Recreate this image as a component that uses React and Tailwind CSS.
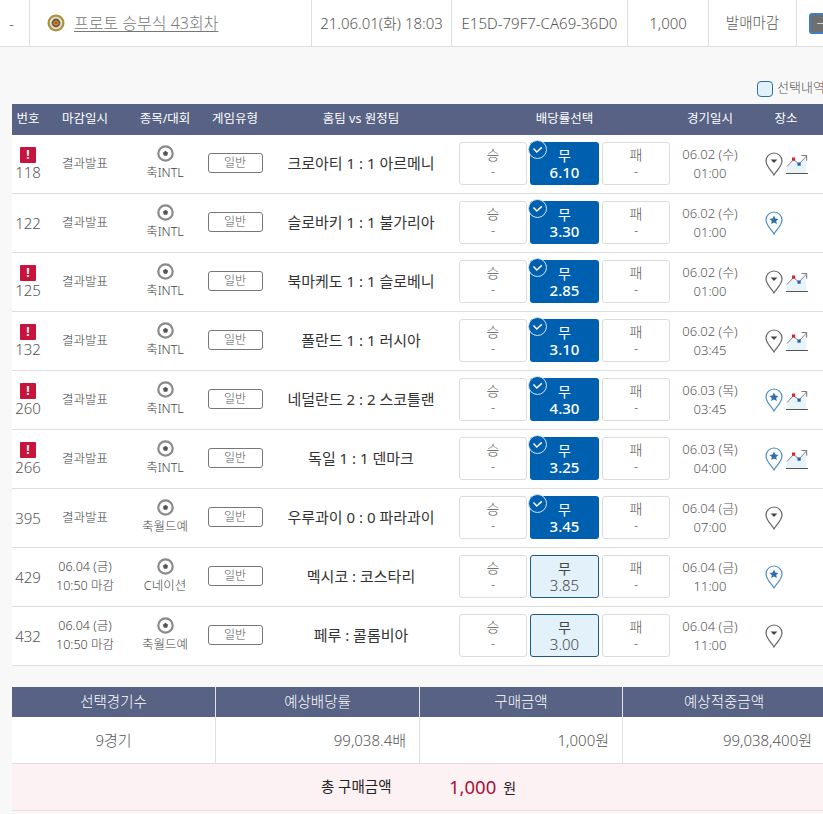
const FONT = "font-['Noto_Sans','Noto_Sans_CJK_KR',sans-serif]";

const games = [
  { no: "118", alert: true, league: "축INTL", match: "크로아티 1 : 1 아르메니", odds: "6.10", date: "06.02 (수)", time: "01:00", pin: "gray", chart: true, done: true },
  { no: "122", league: "축INTL", match: "슬로바키 1 : 1 불가리아", odds: "3.30", date: "06.02 (수)", time: "01:00", pin: "blue", done: true },
  { no: "125", alert: true, league: "축INTL", match: "북마케도 1 : 1 슬로베니", odds: "2.85", date: "06.02 (수)", time: "01:00", pin: "gray", chart: true, done: true },
  { no: "132", alert: true, league: "축INTL", match: "폴란드 1 : 1 러시아", odds: "3.10", date: "06.02 (수)", time: "03:45", pin: "gray", chart: true, done: true },
  { no: "260", alert: true, league: "축INTL", match: "네덜란드 2 : 2 스코틀랜", odds: "4.30", date: "06.03 (목)", time: "03:45", pin: "blue", chart: true, done: true },
  { no: "266", alert: true, league: "축INTL", match: "독일 1 : 1 덴마크", odds: "3.25", date: "06.03 (목)", time: "04:00", pin: "blue", chart: true, done: true },
  { no: "395", league: "축월드예", match: "우루과이 0 : 0 파라과이", odds: "3.45", date: "06.04 (금)", time: "07:00", pin: "gray", done: true },
  { no: "429", league: "C네이션", match: "멕시코 : 코스타리", odds: "3.85", date: "06.04 (금)", time: "11:00", pin: "blue", close: "10:50 마감" },
  { no: "432", league: "축월드예", match: "페루 : 콜롬비아", odds: "3.00", date: "06.04 (금)", time: "11:00", pin: "gray", close: "10:50 마감" },
];

const COLS = "grid grid-cols-[32px_82px_78px_62px_190px_217px_74px_78px]";
const SUMMARY_COLS = "grid grid-cols-[204px_204px_203px_202px]";

function TargetIcon() {
  return (
    <svg width="18" height="18" viewBox="0 0 18 18" className="shrink-0">
      <circle cx="9" cy="9" r="8.5" fill="#a8923f" />
      <circle cx="9" cy="9" r="6.2" fill="#e9e4cf" />
      <circle cx="9" cy="9" r="4.4" fill="#5d5a52" />
      <circle cx="9" cy="9" r="2.6" fill="#d98a1f" />
      <circle cx="9" cy="9" r="1.2" fill="#c9401c" />
    </svg>
  );
}

function BallIcon() {
  return (
    <svg width="17" height="17" viewBox="0 0 17 17">
      <circle cx="8.5" cy="8.5" r="7.2" fill="#fff" stroke="#8a8a8a" strokeWidth="2.2" />
      <path d="M8.5 5.8l2.6 1.9-1 3h-3.2l-1-3z" fill="#555" />
    </svg>
  );
}

function PinIcon({ color }) {
  const blue = color === "blue";
  const stroke = blue ? "#4c8fc4" : "#666";
  return (
    <svg width="18" height="24" viewBox="0 0 18 24">
      <path d="M9 23 C7 19 1 14.5 1 9 A8 8 0 0 1 17 9 C17 14.5 11 19 9 23Z" fill="#fff" stroke={stroke} strokeWidth="1.2" />
      {blue ? (
        <path d="M9 4.6l1.4 2.9 3.1.4-2.3 2.1.6 3.1L9 11.6l-2.8 1.5.6-3.1-2.3-2.1 3.1-.4z" fill="#2d6fab" />
      ) : (
        <path d="M5.6 7.6h6.8L9 11z" fill="#444" />
      )}
    </svg>
  );
}

function ChartIcon() {
  return (
    <svg width="22" height="22" viewBox="0 0 22 22">
      <path d="M1 14 L7.5 6.5 L13 11 L20 4 V20 H1Z" fill="#e9f3fa" />
      <path d="M1 13.5 L7.5 6.5 L13 11 L20.5 3" fill="none" stroke="#777" strokeWidth="0.9" />
      <path d="M15.5 2.5h5.2v5.2" fill="none" stroke="#666" strokeWidth="0.9" />
      <rect x="6" y="4.5" width="3.2" height="3.2" fill="#d3263a" />
      <rect x="11.5" y="9.5" width="3.2" height="3.2" fill="#1f5fb5" />
      <path d="M0 20.5h22" stroke="#555" strokeWidth="1" />
    </svg>
  );
}

function OddButton({ label, value, state }) {
  if (state === "done") {
    return (
      <div className="relative flex h-[43px] w-[69px] flex-col items-center justify-center rounded-[3px] bg-[#0060b0] leading-[17px] text-white">
        <span className="absolute -left-[2px] -top-[2px] flex size-[19px] items-center justify-center rounded-full border border-[#cfe3f3] bg-[#0060b0]">
          <svg width="11" height="8" viewBox="0 0 11 8">
            <path d="M1.5 2.6 L4.8 6 L9.8 1.4" fill="none" stroke="#fff" strokeWidth="1.5" />
          </svg>
        </span>
        <span className="text-[14px]">{label}</span>
        <span className="text-[15px] font-medium">{value}</span>
      </div>
    );
  }
  if (state === "picked") {
    return (
      <div className="flex h-[43px] w-[69px] flex-col items-center justify-center rounded-[3px] border border-[#1d5a85] bg-[#e3f1fb] leading-[17px] text-[#444]">
        <span className="text-[14px]">{label}</span>
        <span className="text-[15px] font-light">{value}</span>
      </div>
    );
  }
  return (
    <div className="flex h-[43px] w-[68px] flex-col items-center justify-center rounded-[3px] border border-[#dcdcdc] bg-white pb-[2px] leading-[16px] text-[#555]">
      <span className="text-[14px] font-light">{label}</span>
      <span className="text-[13px] font-light">-</span>
    </div>
  );
}

function GameRow({ game }) {
  return (
    <div className={`${COLS} h-[59px] items-center border-b border-[#dedede] bg-white`}>
      <div className="flex flex-col items-center">
        {game.alert && (
          <span className="mb-[1px] flex size-4 items-center justify-center rounded-[1px] bg-[#c8143c] text-[12px] font-bold leading-none text-white">!</span>
        )}
        <span className={`text-[15px] font-light text-[#555] ${game.alert ? "leading-[17px]" : "leading-5"}`}>{game.no}</span>
      </div>
      <div className="pb-[2px] text-center text-[12.5px] font-light leading-[19px] text-[#444]">
        {game.close ? (
          <>
            <div>06.04 (금)</div>
            <div>{game.close}</div>
          </>
        ) : (
          "결과발표"
        )}
      </div>
      <div className="flex flex-col items-center pb-[2px] text-[12.5px] font-light leading-[17px] text-[#444]">
        <BallIcon />
        <span className="mt-[2px]">{game.league}</span>
      </div>
      <div className="flex justify-center pb-[2px]">
        <span className="flex h-5 w-[55px] items-center justify-center rounded-[3px] border border-[#777] text-[12px] font-light text-[#555]">일반</span>
      </div>
      <div className="pb-[2px] text-center text-[15px] text-[#333]">{game.match}</div>
      <div className="flex items-center justify-center gap-[3px] pb-[1px]">
        <OddButton label="승" value="-" />
        <OddButton label="무" value={game.odds} state={game.done ? "done" : "picked"} />
        <OddButton label="패" value="-" />
      </div>
      <div className="pb-[1px] text-center text-[13px] font-light leading-[19px] text-[#555]">
        <div>{game.date}</div>
        <div>{game.time}</div>
      </div>
      <div className="flex items-center gap-[3px] pl-[18px]">
        <PinIcon color={game.pin} />
        {game.chart && <ChartIcon />}
      </div>
    </div>
  );
}

export default function App() {
  return (
    <div className={`${FONT} h-[814px] w-[823px] overflow-hidden bg-[#f8f8f8]`}>
      {/* ticket row */}
      <div className="flex h-[47px] items-center overflow-hidden border-b border-[#dedede] bg-white text-[15px] font-light text-[#555]">
        <div className="flex h-full w-[30px] shrink-0 items-center justify-center border-r border-[#dedede] pr-[6px] text-[14px]">-</div>
        <div className="flex h-full w-[282px] shrink-0 items-center gap-[9px] border-r border-[#dedede] pl-[17px]">
          <TargetIcon />
          <span className="text-[16px] text-[#777] underline underline-offset-2">프로토 승부식 43회차</span>
        </div>
        <div className="flex h-full w-[140px] shrink-0 items-center justify-center whitespace-nowrap border-r border-[#dedede]">21.06.01(화) 18:03</div>
        <div className="flex h-full w-[176px] shrink-0 items-center justify-center whitespace-nowrap border-r border-[#dedede]">E15D-79F7-CA69-36D0</div>
        <div className="flex h-full w-[81px] shrink-0 items-center justify-center border-r border-[#dedede]">1,000</div>
        <div className="flex h-full w-[88px] shrink-0 items-center justify-center border-r border-[#dedede] text-[14.5px]">발매마감</div>
        <div className="flex h-full w-[40px] shrink-0 items-center pl-[12px]">
          <span className="flex h-[21px] w-[22px] shrink-0 items-center justify-center rounded-[3px] border-2 border-[#3f7fc0] bg-[#6f6f6f] text-[13px] leading-none text-white">−</span>
        </div>
      </div>

      <div className="flex h-[57px] items-end gap-[4px] overflow-hidden pb-[7px] pl-[757px]">
        <span className="size-4 shrink-0 rounded-[4px] border border-[#2f6ea5] bg-[#e3f1fb]" />
        <span className="whitespace-nowrap text-[13px] font-light text-[#555]">선택내역</span>
      </div>

      {/* games */}
      <div className="ml-3 w-[813px]">
        <div className={`${COLS} h-[31px] items-center bg-[#576285] text-center text-[12.5px] text-white`}>
          <div>번호</div>
          <div>마감일시</div>
          <div>종목/대회</div>
          <div>게임유형</div>
          <div>홈팀 vs 원정팀</div>
          <div>배당률선택</div>
          <div>경기일시</div>
          <div>장소</div>
        </div>
        {games.map((game) => (
          <GameRow key={game.no} game={game} />
        ))}
      </div>

      {/* summary */}
      <div className="ml-3 mt-[21px] w-[813px]">
        <div className={`${SUMMARY_COLS} h-[30px] items-center bg-[#576285] text-center text-[14.5px] font-light text-white`}>
          <div className="flex h-full items-center justify-center border-r border-[#e5e5e5]">선택경기수</div>
          <div className="flex h-full items-center justify-center border-r border-[#e5e5e5]">예상배당률</div>
          <div className="flex h-full items-center justify-center border-r border-[#e5e5e5]">구매금액</div>
          <div className="flex h-full items-center justify-center">예상적중금액</div>
        </div>
        <div className={`${SUMMARY_COLS} h-[47px] border-b border-[#dedede] bg-white text-[15px] font-light text-[#555]`}>
          <div className="flex items-center justify-center border-r border-[#dedede]">9경기</div>
          <div className="flex items-center justify-end border-r border-[#dedede] pr-[13px]">99,038.4배</div>
          <div className="flex items-center justify-end border-r border-[#dedede] pr-[13px]">1,000원</div>
          <div className="flex items-center justify-end pr-[13px]">99,038,400원</div>
        </div>
        <div className="flex h-[47px] items-center border-b border-[#e2e2e2] bg-[#fcf1f3] pl-[309px]">
          <span className="w-[128px] whitespace-nowrap text-[14.5px] text-[#222]">총 구매금액</span>
          <span className="text-[18.5px] text-[#a6103a]">1,000</span>
          <span className="ml-[7px] text-[14px] text-[#222]">원</span>
        </div>
      </div>
    </div>
  );
}
